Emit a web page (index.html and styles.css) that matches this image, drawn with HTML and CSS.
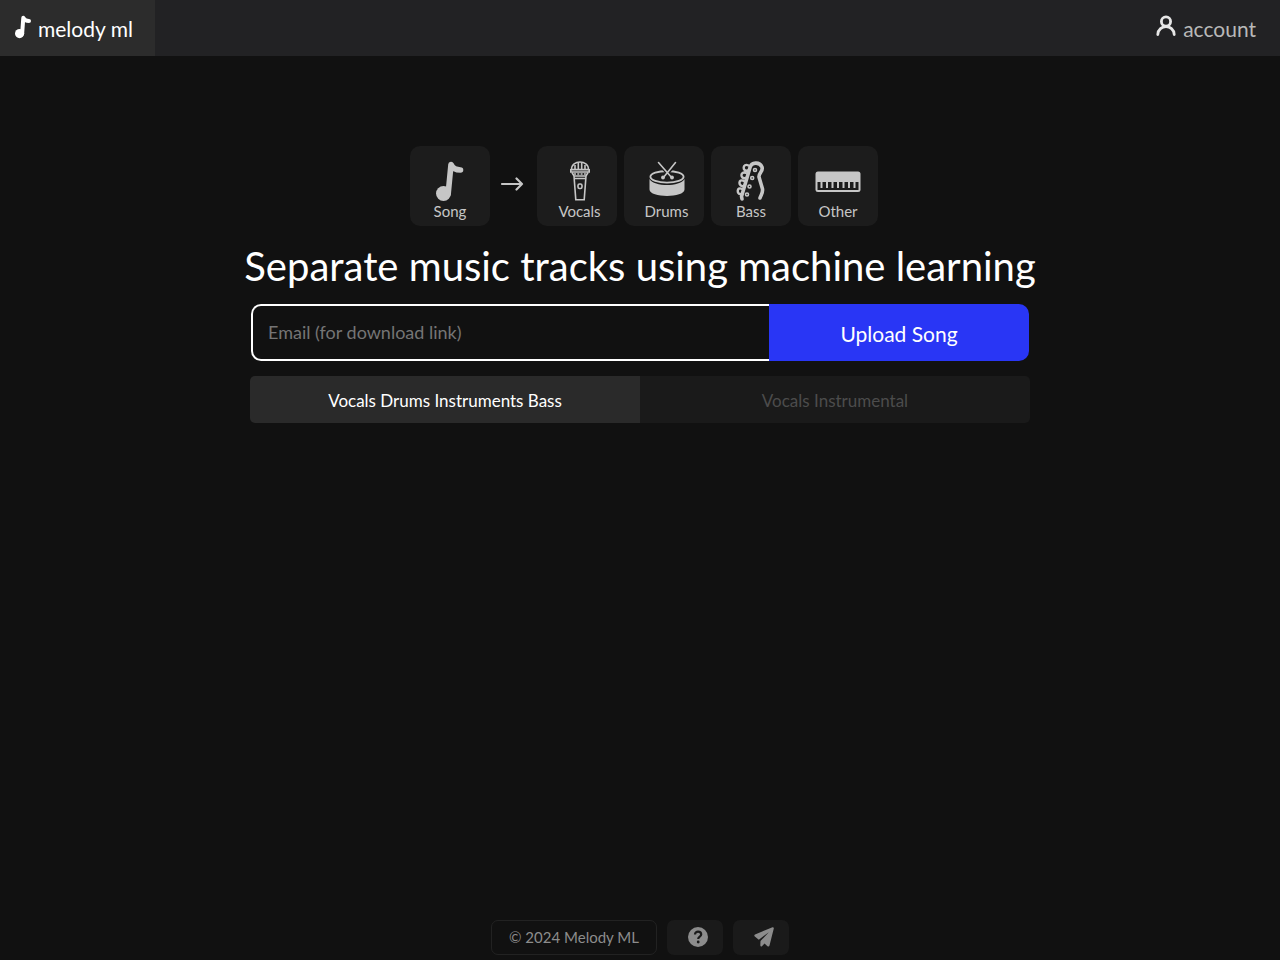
FILE: index.html
```html
<!DOCTYPE html>
<html lang="en">
<head>
    <meta charset="UTF-8">
    <meta name="viewport" content="width=device-width, initial-scale=1.0">
    <title>Melody ML</title>
    <link rel="stylesheet" href="styles.css">
</head>
<body>
    <!-- Header -->
    <header class="navbar">
        <a class="brand" href="#">
            <svg class="brand-icon" width="16" height="24" viewBox="0 0 28 41" fill="currentColor">
                <circle cx="8" cy="32" r="8"/>
                <path d="M12.500 32 L14.500 4.500 C17 9 20 10 24.500 10" fill="none" stroke="currentColor" stroke-width="7" stroke-linecap="round" stroke-linejoin="round"/>
            </svg>
            <span>melody ml</span>
        </a>
        <a class="account" href="#">
            <svg class="account-icon" width="20" height="22" viewBox="0 0 20 22" fill="none" stroke="currentColor" stroke-width="2.800" stroke-linecap="round">
                <circle cx="10" cy="6.500" r="4.600"/>
                <path d="M1.800 19.500 C2.300 9 17.700 9 18.200 19.500"/>
            </svg>
            <span>account</span>
        </a>
    </header>

    <!-- Main content -->
    <main>
        <div class="tracks">
            <div class="track">
                <svg width="28" height="41" viewBox="0 0 28 41" fill="currentColor">
                    <circle cx="7.500" cy="32.500" r="7.500"/>
                    <path d="M12.200 32.500 L15 3.500 C17 8 20 9 24.500 9" fill="none" stroke="currentColor" stroke-width="5.600" stroke-linecap="round" stroke-linejoin="round"/>
                </svg>
                <span>Song</span>
            </div>
            <svg class="arrow" width="24" height="16" viewBox="0 0 24 16" fill="none" stroke="currentColor" stroke-width="2.200" stroke-linecap="round" stroke-linejoin="round">
                <path d="M2 8 H22 M16.500 2.500 L22 8 L16.500 13.500"/>
            </svg>
            <div class="track shifted">
                <svg width="22" height="41" viewBox="0 0 22 41" fill="none" stroke="currentColor" stroke-width="1.600">
                    <path d="M2.500 8.500 C2.500 -1.500 19.500 -1.500 19.500 8.500 Z M1.800 8.700 H20.200 V11 H1.800 Z"/>
                    <path d="M6 9 V4 M9.300 9 V2 M12.700 9 V2 M16 9 V4"/>
                    <path d="M3 11.500 L5 15 H17 L19 11.500 M5 15 L6.800 38.700 H15.200 L17 15 M5 17.500 H17"/>
                    <path d="M5 13 H17" stroke-dasharray="2 1.300"/>
                    <rect x="9" y="23" width="4" height="4.500" rx="1.600"/>
                </svg>
                <span>Vocals</span>
            </div>
            <div class="track shifted">
                <svg width="36" height="41" viewBox="0 0 36 41">
                    <path d="M.5 18 C5 26 31 26 35.500 18 V28.500 C35.500 37 .5 37 .5 28.500 Z" fill="currentColor"/>
                    <ellipse cx="18" cy="15.800" rx="16.600" ry="5.800" fill="#1c1c1c" stroke="currentColor" stroke-width="1.800"/>
                    <path d="M10 2 L23 17 M27 2 L14 17" stroke="#1c1c1c" stroke-width="4"/>
                    <path d="M9.500 1.500 L23 17 M26.500 1.500 L14 17" stroke="currentColor" stroke-width="1.600" stroke-linecap="round"/>
                    <circle cx="14" cy="16.500" r="1.900" fill="currentColor"/>
                    <circle cx="23" cy="16.500" r="1.900" fill="currentColor"/>
                </svg>
                <span>Drums</span>
            </div>
            <div class="track">
                <svg width="30" height="41" viewBox="0 0 30 41" fill="none" stroke="currentColor" stroke-linecap="round" stroke-linejoin="round">
                    <path d="M6 38 L5.500 35.500 L14 6.500 C15.500 1 23.500 .5 26 6 C27.500 10.500 22.500 12 23 16 L26.500 28 C27 32 25 34 24 37" stroke-width="3.600"/>
                    <path d="M12.500 4.500 C6.500 1.500 6 11 11.500 9.500 M10 12 C4 9.500 4 18.500 9.500 17 M8 20 C2 17 2 26 7.500 25 M6 28 C.5 25 .5 34 5 33" stroke-width="2.400"/>
                    <g stroke-width="1.600">
                        <circle cx="19" cy="9" r="1.500"/>
                        <circle cx="16.200" cy="17" r="1.500"/>
                        <circle cx="13.500" cy="25.500" r="1.500"/>
                        <circle cx="11" cy="33.500" r="1.500"/>
                    </g>
                </svg>
                <span>Bass</span>
            </div>
            <div class="track">
                <svg width="46" height="41" viewBox="0 0 46 41">
                    <rect x=".5" y="10.500" width="45" height="20.500" rx="2.500" fill="currentColor"/>
                    <path d="M2.500 21 H43.500 V29 H2.500 Z" fill="#1c1c1c"/>
                    <path d="M6.500 21 V27 M12 21 V27 M17.500 21 V27 M23 21 V27 M28.500 21 V27 M34 21 V27 M39.500 21 V27" stroke="currentColor" stroke-width="2"/>
                </svg>
                <span>Other</span>
            </div>
        </div>

        <h1>Separate music tracks using machine learning</h1>

        <form class="upload" onsubmit="return false">
            <input type="email" placeholder="Email (for download link)" aria-label="Email (for download link)">
            <button type="submit">Upload Song</button>
        </form>

        <div class="modes">
            <button type="button" class="active">Vocals Drums Instruments Bass</button>
            <button type="button">Vocals Instrumental</button>
        </div>
    </main>

    <!-- Footer -->
    <footer>
        <div class="copyright">&copy; 2024 Melody ML</div>
        <a class="footer-link" href="#" aria-label="Help">
            <svg width="20" height="20" viewBox="0 0 20 20">
                <circle cx="10" cy="10" r="10" fill="currentColor"/>
                <path d="M7 7.500 C7 3.500 13.200 3.800 13.200 7.500 C13.200 9.800 10.200 9.500 10.200 12" fill="none" stroke="#1a1a1a" stroke-width="2.200"/>
                <circle cx="10.200" cy="15" r="1.400" fill="#1a1a1a"/>
            </svg>
        </a>
        <a class="footer-link" href="#" aria-label="Contact">
            <svg width="20" height="20" viewBox="0 0 20 20" fill="currentColor">
                <path d="M18.500 .2 Q20 0 19.800 1.500 L15.500 18.500 Q15 20 13.500 19.200 L10.500 16.500 L8 19.300 Q6.500 20 6.300 18.300 L6.500 14 L14.800 5.200 L4.800 12.800 L.8 9.500 Q-.3 8.300 1 7.500 Z"/>
            </svg>
        </a>
    </footer>
</body>
</html>
```

FILE: styles.css
```css
* {
    box-sizing: border-box;
}

body {
    margin: 0;
    min-height: 100vh;
    display: flex;
    flex-direction: column;
    background-color: #111;
    color: #fff;
    font-family: Lato, "Open Sans", sans-serif;
}

a {
    color: inherit;
    text-decoration: none;
}

button, input {
    font-family: inherit;
}

.navbar {
    display: flex;
    justify-content: space-between;
    height: 56px;
    background-color: #222224;
    font-size: 21px;
}

.brand, .account {
    display: flex;
    gap: 7px;
    padding: 0 22px 0 15px;
    line-height: 57px;
}

.brand {
    background-color: #2c2c2c;
}

.brand-icon {
    margin-top: 15px;
}

.account {
    padding-right: 24px;
    color: #b8b8b8;
}

.account-icon {
    margin-top: 15px;
    color: #e6e6e6;
}

main {
    flex-grow: 1;
    display: flex;
    flex-direction: column;
    align-items: center;
    padding: 90px 16px 0;
}

.tracks {
    display: flex;
    align-items: center;
    gap: 7px;
    padding-left: 8px;
    color: #c6c6c6;
}

.track {
    display: flex;
    flex-direction: column;
    align-items: center;
    width: 80px;
    height: 80px;
    padding-top: 15px;
    border-radius: 10px;
    background-color: #1c1c1c;
    font-size: 15px;
    line-height: 18px;
}

.shifted {
    padding-left: 5px;
}

.arrow {
    margin: 0 6px 4px 3px;
}

h1 {
    margin: 16px 0 14px;
    font-size: 40px;
    font-weight: 400;
    line-height: 48px;
    text-align: center;
}

.upload {
    display: flex;
    width: 100%;
    max-width: 778px;
    height: 57px;
}

.upload input {
    flex: 1;
    min-width: 0;
    padding: 0 15px 2px;
    border: 2px solid #fff;
    border-right: none;
    border-radius: 10px 0 0 10px;
    background: none;
    color: #fff;
    font-size: 18px;
}

.upload input::placeholder {
    color: #757575;
}

.upload button {
    width: 260px;
    padding: 2px 0 0;
    border: none;
    border-radius: 0 10px 10px 0;
    background-color: #2936f5;
    color: #fff;
    font-size: 21px;
}

.modes {
    display: flex;
    width: 100%;
    max-width: 780px;
    margin-top: 15px;
    border-radius: 5px;
    overflow: hidden;
}

.modes button {
    flex: 1;
    height: 47px;
    padding: 2px 0 0;
    border: none;
    background-color: #1a1a1a;
    color: #4c4c4c;
    font-size: 17px;
}

.modes .active {
    background-color: #2a2a2a;
    color: #fff;
}

footer {
    display: flex;
    justify-content: center;
    gap: 10px;
    padding-bottom: 5px;
    color: #8c8c8c;
}

.copyright {
    padding: 0 17px;
    border: 1px solid #222;
    border-radius: 7px;
    font-size: 15px;
    line-height: 33px;
}

.footer-link {
    display: flex;
    align-items: center;
    justify-content: center;
    width: 56px;
    padding-left: 6px;
    padding-bottom: 1px;
    border-radius: 7px;
    background-color: #1a1a1a;
}

@media (max-width: 600px) {
    .tracks {
        flex-wrap: wrap;
        justify-content: center;
    }

    .upload button {
        width: 140px;
    }
}
```
